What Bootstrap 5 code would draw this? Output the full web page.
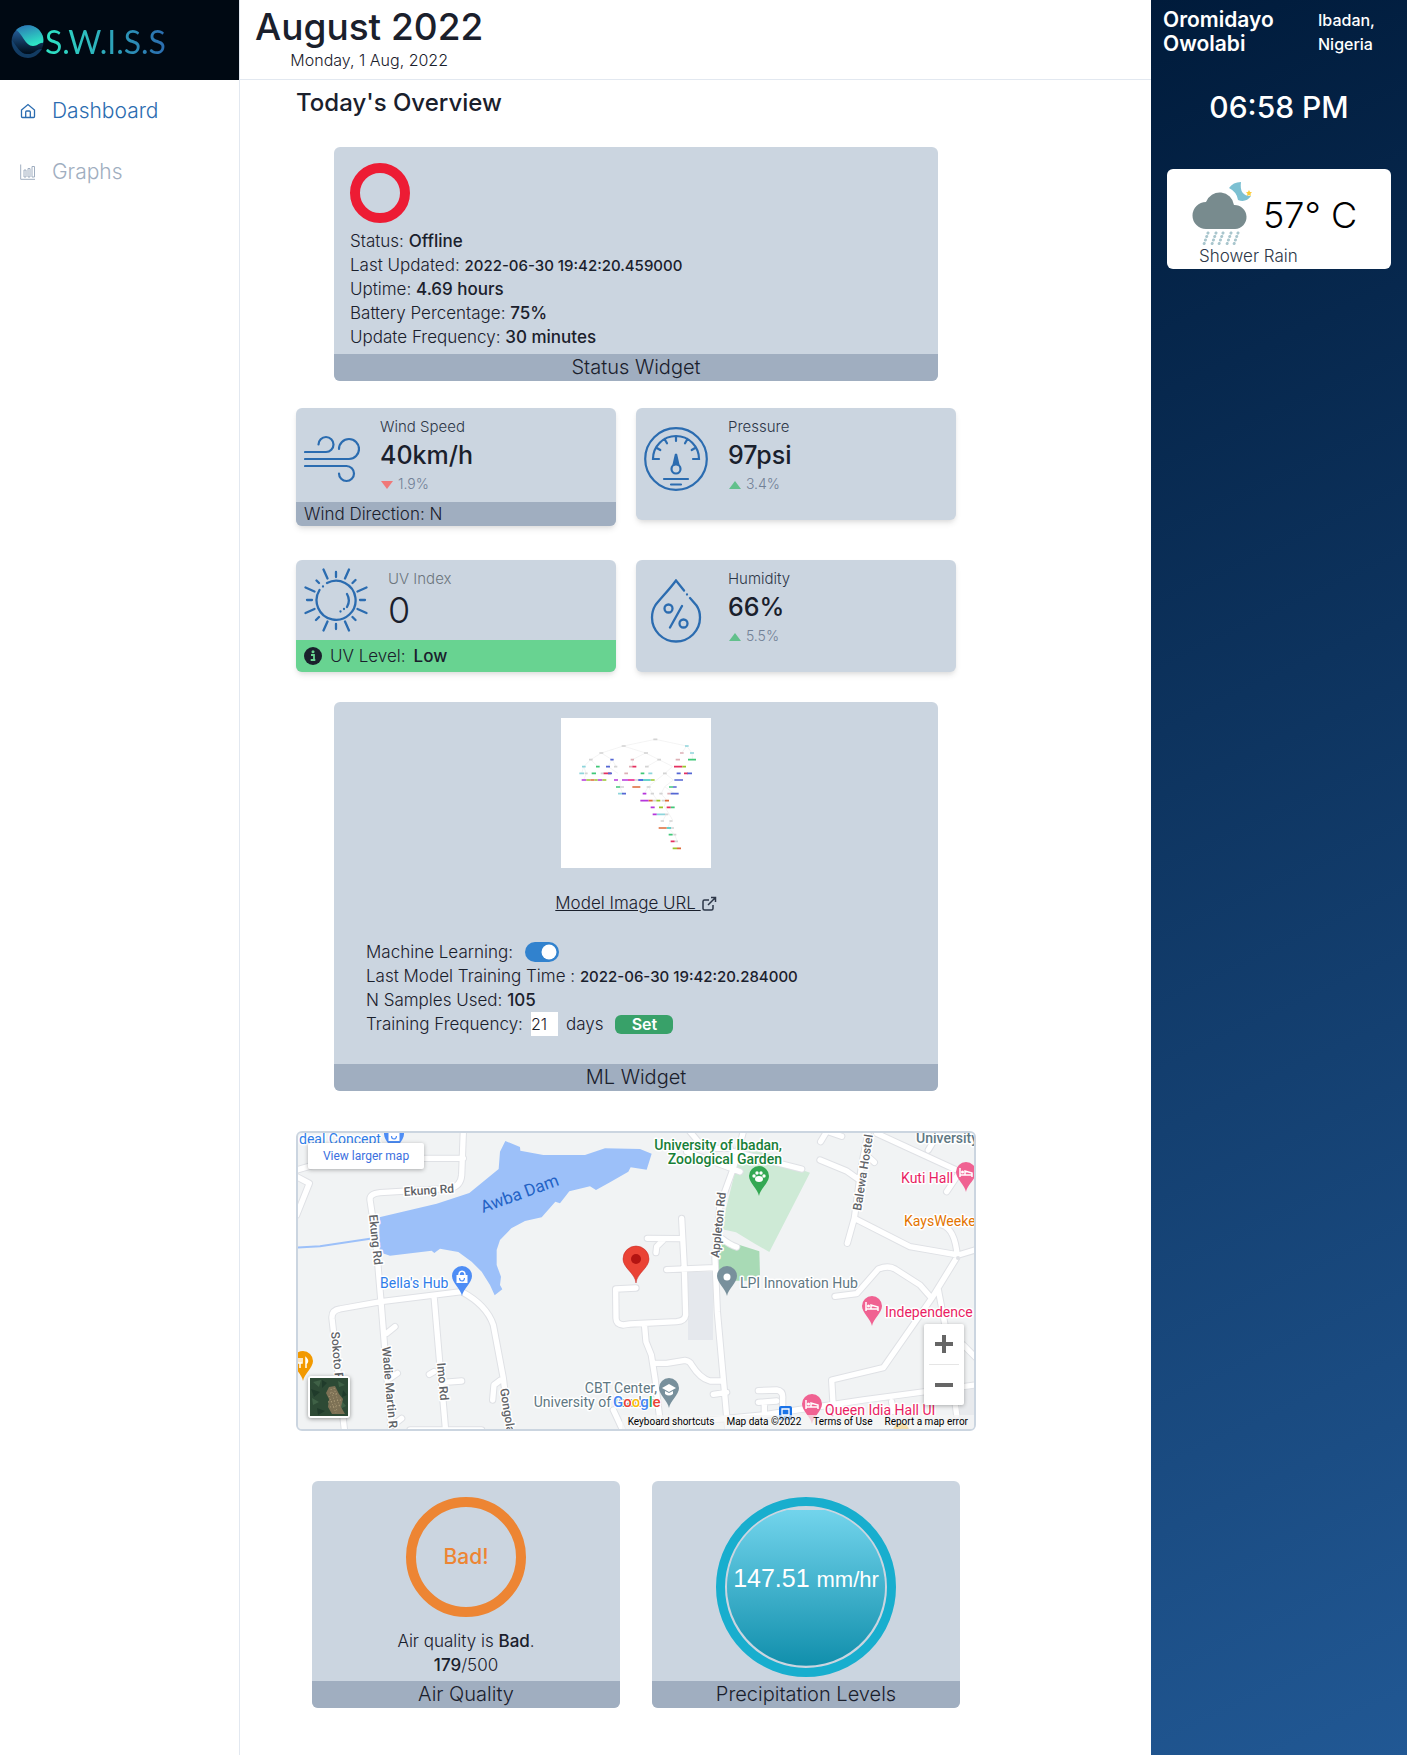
<!DOCTYPE html>
<html lang="en">
<head>
<meta charset="utf-8">
<meta name="viewport" content="width=device-width, initial-scale=1">
<title>S.W.I.S.S Dashboard</title>
<link href="https://cdn.jsdelivr.net/npm/bootstrap@5.3.0/dist/css/bootstrap.min.css" rel="stylesheet">
<style>
body{font-family:Inter,"Open Sans",sans-serif;font-weight:300;font-size:17px;line-height:24px;color:#1a202c;background:#fff}
b,.semi{font-weight:500}
.stamp{font-size:15px;line-height:16px}
.side-col{width:240px;border-right:1px solid #e2e8f0}
.brand-bar{height:80px;background:#000913;padding-left:11px}
.brand-name{font-family:Lato,sans-serif;font-weight:400;font-size:32px;line-height:40px;background:linear-gradient(90deg,#2ee6c5,#2b6cb0);-webkit-background-clip:text;background-clip:text;color:transparent}
.side-nav{padding-top:1px;gap:1px}
.side-link{font-size:21px;line-height:30px;padding:15px 20px;color:#a0aec0;text-decoration:none;gap:16px}
.side-link.active{color:#2b6cb0}
.top-bar{height:80px;border-bottom:1px solid #e2e8f0;padding:5px 15px 0;font-size:16px}
.top-bar h1{font-size:37px;line-height:43px;font-weight:500}
.content-col{max-width:736px;padding:8px 0 47px 56px}
.content-col h2{font-size:24px;line-height:29px;font-weight:500;margin-bottom:30px}
.panel{background:#cbd5e0;border-radius:6px;overflow:hidden}
.panel-wide{margin:0 38px}
.status-body{padding:16px 16px 5px}
.panel-foot{background:#a0aec0;font-size:20px;line-height:27px;text-align:center}
.wind-foot{background:#a0aec0;padding:0 8px}
.tile-grid{display:grid;grid-template-columns:1fr 1fr;column-gap:20px;row-gap:34px;align-items:start;margin:27px 20px 30px 0}
.tile{min-height:112px;box-shadow:0 4px 6px -1px rgba(0,0,0,.1),0 2px 4px -1px rgba(0,0,0,.06)}
.tile-body{padding:8px;gap:20px}
.tile-icon{margin-top:11px}
.tile-label{font-size:15px;line-height:21px;color:#2d3748}
.tile-value{font-size:25px;line-height:36px;font-weight:500}
.tile-big{font-size:36px;line-height:43px}
.tile-delta{font-size:14px;line-height:21px;color:#718096}
.uv-foot{background:#68d391;padding:4px 8px;gap:8px}
.ring{border:10px solid #ed1c34;border-radius:50%;width:60px;height:60px;margin-bottom:6px}
.ring-air{width:120px;height:120px;border-color:#ed8533;color:#ed8533;font-size:21px}
.gauge{width:180px;height:180px;display:block}
.model-link{display:block;width:max-content;margin:23px auto 0}
.ml-lines{padding:25px 32px 28px}
.form-switch .ml-switch,.ml-switch.form-check-input{width:34px;height:20px;margin:0 0 0 12px;border:0;background-color:#3182ce;border-color:#3182ce;box-shadow:none}
.days-box{width:27px;height:24px;padding:0;border:0;background:#fff;color:inherit;font-weight:300;font-size:16px}
.set-btn{width:58px;height:19px;line-height:19px;padding:0;background:#38a169;color:#fff;border:0;border-radius:6px;font-weight:600;font-size:16px}
.map-frame{height:300px;margin:40px 0 50px;border:2px solid #cbd5e0;border-radius:6px;overflow:hidden;background:#f1f3f4;font-family:Roboto,sans-serif;font-weight:400}
.map-frame svg text{font-family:Roboto,sans-serif}
.map-larger{left:10px;top:10px;width:116px;height:26px;background:#fff;border-radius:2px;font-size:12px;line-height:26px;text-align:center;color:#3b6fe0;text-decoration:none;box-shadow:0 1px 4px rgba(0,0,0,.3)}
.map-sat{left:10px;bottom:11px;padding:0;border:2px solid #fff;border-radius:3px;box-shadow:0 1px 4px rgba(0,0,0,.4);line-height:0}
.map-zoom{right:10px;bottom:24px;width:40px;background:#fff;border-radius:2px;box-shadow:0 1px 4px rgba(0,0,0,.3)}
.map-zoom button{width:40px;height:40px;padding:0;border:0;background:none;display:flex;align-items:center;justify-content:center}
.map-zoom hr{margin:0 5px;color:#999}
.map-credits{right:0;bottom:0;height:14px;padding:0 6px;gap:12px;background:rgba(245,245,245,.7);font-size:10px;line-height:14px}
.map-credits a,.map-credits button{color:#000;text-decoration:none;border:0;padding:0;background:none;line-height:14px}
.duo{gap:32px;padding:0 16px}
.air-text{padding-top:6px}
.right-col{width:256px;background:linear-gradient(155deg,#001b3b,#215894);color:#fff}
.who{padding:8px 12px;font-weight:600}
.who-name{width:155px;font-size:21px}
.who-place{font-size:16px}
.clock{font-size:30px;line-height:36px;font-weight:500;margin-top:25px}
.weather{margin:44px 16px 0;height:100px;border-radius:6px;background:#fff;color:#2d3748;padding:10px 0 0 22px}
.weather-temp{font-size:36px;line-height:43px;color:#000;padding-top:15px}
.weather-name{line-height:22px;padding-left:10px}
</style>
</head>
<body>
<svg width="0" height="0" class="position-absolute" aria-hidden="true"><defs>
<path id="pin" d="M0 0C-1-7-10-13-10-20a10 10 0 1 1 20 0c0 7-9 13-10 20z"/>
<g id="bed"><use href="#pin" fill="#f06292"/><path d="M-6-24v9M-6-17H6M6-15v-4l-7-2v4" fill="none" stroke="#fff" stroke-width="1.500"/><circle cx="-3.500" cy="-20" r="1.500" fill="#fff"/></g>
<g id="bag" stroke="none"><use href="#pin" fill="#4e8df5"/><path d="M-5.500-21h11v8h-11z" fill="#fff"/><path d="M-3-21c0-5 6-5 6 0" fill="none" stroke="#fff" stroke-width="1.500"/><path d="M-2.500-18c0 4 5 4 5 0" fill="none" stroke="#4e8df5" stroke-width="1.200"/></g>
</defs></svg>
<div class="d-flex min-vh-100">
  <aside class="side-col flex-shrink-0">
    <div class="brand-bar d-flex align-items-center pt-1">
      <svg width="34" height="34" viewBox="0 0 34 34" aria-hidden="true"><defs><linearGradient id="orb" x1="0" y1="0" x2="0" y2="1"><stop offset="0" stop-color="#2b6cb0"/><stop offset=".85" stop-color="#01101f"/></linearGradient><linearGradient id="orb2" x1=".2" y1="0" x2=".6" y2="1"><stop offset="0" stop-color="#2b78b5"/><stop offset="1" stop-color="#2eeac6"/></linearGradient></defs><circle cx="16.500" cy="16.500" r="16" fill="url(#orb)"/><path d="M5 5C11-1 23-2 29 6c3 4 4 7 3 12-3-1-5 3-10 3C14 21 12 9 5 5z" fill="url(#orb2)"/><path d="M1 15c5 7 9 15 16 14 7 0 9-6 14-5-3 5-8 9-14 9C7 33 0 24 1 15z" fill="#184978" opacity=".75"/></svg>
      <span class="brand-name">S.W.I.S.S</span>
    </div>
    <nav class="side-nav d-flex flex-column">
      <a href="#" class="side-link active d-flex align-items-center"><svg width="16" height="16" viewBox="0 0 16 16" fill="none" stroke="currentColor" stroke-width="1.300" aria-hidden="true"><path d="M1.500 7 8 1.500 14.500 7v6.500a1 1 0 0 1-1 1h-11a1 1 0 0 1-1-1zM5.700 14.500V9q0-1 1-1h2.600q1 0 1 1v5.500"/></svg>Dashboard</a>
      <a href="#" class="side-link d-flex align-items-center"><svg width="16" height="16" viewBox="0 0 16 16" fill="none" stroke="currentColor" aria-hidden="true"><path d="M.7.500v14.800H15M4 6h2v7H4zM8 4.500h2V13H8zM12 2.500h2.500V13H12z"/></svg>Graphs</a>
    </nav>
  </aside>

  <main class="flex-grow-1">
    <header class="top-bar d-flex"><div class="text-center"><h1 class="m-0">August 2022</h1><div>Monday, 1 Aug, 2022</div></div></header>
    <div class="content-col">
      <h2>Today's Overview</h2>

      <section class="panel panel-wide">
        <div class="status-body">
          <div class="ring"></div>
          <div>Status: <b>Offline</b></div>
          <div>Last Updated: <b class="stamp">2022-06-30 19:42:20.459000</b></div>
          <div>Uptime: <b>4.69 hours</b></div>
          <div>Battery Percentage: <b>75%</b></div>
          <div>Update Frequency: <b>30 minutes</b></div>
        </div>
        <div class="panel-foot">Status Widget</div>
      </section>

      <div class="tile-grid">
        <section class="panel tile">
          <div class="tile-body d-flex">
            <svg class="tile-icon" width="56" height="64" viewBox="0 0 56 64" fill="none" stroke="#2b6cb0" stroke-width="2.200" stroke-linecap="round" aria-hidden="true"><path d="M1 25h21a7.500 7.500 0 1 0-7.500-7.500M1 32h44a10 10 0 1 0-10-10M1 39h41.500a7.500 7.500 0 1 1-7.500 7.500"/></svg>
            <div><div class="tile-label">Wind Speed</div><div class="tile-value">40km/h</div>
            <div class="tile-delta"><svg width="14" height="10" viewBox="0 0 14 10" aria-hidden="true"><path d="M1 1h12L7 9z" fill="#f07878"/></svg> 1.9%</div></div>
          </div>
          <div class="wind-foot">Wind Direction: N</div>
        </section>
        <section class="panel tile">
          <div class="tile-body d-flex">
            <svg class="tile-icon" width="64" height="64" viewBox="0 0 64 64" fill="none" stroke="#2b6cb0" stroke-width="2.200" stroke-linecap="round" aria-hidden="true"><circle cx="32" cy="32" r="30.800"/><path d="M15 32H9a23 23 0 0 1 46 0h-6M32 9v5M20.500 12l2.500 4.300M43.500 12 41 16.300M12 20.500l4.300 2.500M52 20.500 47.700 23M20 52h24M27 57.500h10"/><circle cx="32" cy="42" r="4.500"/><path d="M29.500 38 32 27l2.500 11M32 31v6"/></svg>
            <div><div class="tile-label">Pressure</div><div class="tile-value">97psi</div>
            <div class="tile-delta"><svg width="14" height="10" viewBox="0 0 14 10" aria-hidden="true"><path d="M1 9h12L7 1z" fill="#62c08c"/></svg> 3.4%</div></div>
          </div>
        </section>
        <section class="panel tile">
          <div class="tile-body d-flex">
            <svg width="64" height="64" viewBox="0 0 64 64" fill="none" stroke="#2b6cb0" stroke-width="2.300" stroke-linecap="round" aria-hidden="true"><path d="M23 15a19.500 19.500 0 1 1-7.500 7M43 26a13 13 0 0 1 0 13M32 4v5M32 56v5M3 32h5M56 32h5M12.500 12.500l2.500 2.500M48.500 15l3-3M12 52l3-3M48.500 49l3 3M19.500 1.500l4 9M45 1.500l-4 9M1.500 19.500l9 4M62.500 19.500l-9 4M1.500 45l9-4M62.500 45l-9-4M19.500 62.500l4-9M45 62.500l-4-9M19 18.500v0M36.500 43.500v0M40 41v0"/></svg>
            <div><div class="tile-label text-secondary">UV Index</div><div class="tile-big">0</div></div>
          </div>
          <div class="uv-foot d-flex align-items-center"><svg width="18" height="18" viewBox="0 0 18 18" aria-hidden="true"><circle cx="9" cy="9" r="9" fill="#1a202c"/><circle cx="9" cy="4.700" r="1.500" fill="#68d391"/><path d="M7 8h3v4.500M6.700 13h4.600" fill="none" stroke="#68d391" stroke-width="1.800"/></svg><span>UV Level:</span><b>Low</b></div>
        </section>
        <section class="panel tile">
          <div class="tile-body d-flex">
            <svg class="tile-icon" width="64" height="64" viewBox="0 0 64 64" fill="none" stroke="#2b6cb0" stroke-width="2.300" stroke-linecap="round" aria-hidden="true"><path d="M40 11.500 32 1.500C25 11 17 19 11.500 26 9 30 8 34 8 38.500a24 24 0 0 0 48 0C56 34 55 30 52.500 26.500L46 19M43 15.500v0M38 27 26 48.500"/><circle cx="24.500" cy="29.500" r="4"/><circle cx="39.500" cy="44.500" r="4"/></svg>
            <div><div class="tile-label">Humidity</div><div class="tile-value">66%</div>
            <div class="tile-delta"><svg width="14" height="10" viewBox="0 0 14 10" aria-hidden="true"><path d="M1 9h12L7 1z" fill="#62c08c"/></svg> 5.5%</div></div>
          </div>
        </section>
      </div>

      <section class="panel panel-wide">
        <div class="pt-3">
          <svg class="d-block mx-auto bg-white" width="150" height="150" viewBox="63 54 450 450" role="img" aria-label="Decision tree">
            <g fill="none" stroke="#e8e8e8" stroke-width="1.500"><path d="M346 118 250 138 184 159 152 179 131 200 125 220M346 118 440 138 425 159M440 138l16 21 2 20M250 138l67 21-40 20 2 20M317 159l40 20 40 20M184 159l32 20 12 20M152 179l22 21M216 179l-12 21 30 20M357 179l-37 21M397 200l-22 20-50 40-12 20M375 220l25 20-26 20-10 20M374 260l28 20M325 260l12 20 14 20M362 280l18 20-8 20M374 320l24 40M380 342l-12 20M392 362l-8 20 20 22 8 20M240 240v20l8 20M131 200l8 20-8 20"/></g>
            <g stroke-width="5" fill="none"><path stroke="#d4d4d4" d="M340 118h12M245 138h12M178 159h12M312 159h12M147 179h11M352 179h11M315 200h11M369 220h11M320 261h12M332 281h10M358 281h10M362 363h10M388 363h10M338 302h10M365 302h10M375 343h10M400 404h9M405 424h9M222 200h10M134 220h9M182 220h10M392 384h10M240 261h12M285 240h12"/>
            <path stroke="#8ed5dc" d="M435 138h11M450 159h12M126 200h11M118 220h14M325 220h12M234 281h12M350 343h25"/><path stroke="#ddb0b6" d="M420 159h11M407 179h13M272 179h10M267 200h10M253 220h11M382 281h10"/><path stroke="#40c878" d="M444 179h24M168 200h11M155 220h13M228 261h12M302 220h11M387 261h12M386 404h12M392 322h12"/><path stroke="#e53060" d="M402 200h25M432 220h12M277 200h12M191 220h22M392 424h12M380 322h12"/><path stroke="#5567d4" d="M198 200h12M204 220h12M442 220h14M410 220h12M403 240h26M246 281h12M399 261h11M392 281h24M211 179h10"/><path stroke="#b637dc" d="M125 240h14M173 240h14M222 240h12M246 240h18M301 302h25M332 322h12M338 343h12M308 281h11"/><path stroke="#9bc52d" d="M139 240h12M163 240h10M187 240h12M427 200h11M349 302h12M357 322h12M398 445h13M332 240h12"/><path stroke="#36c4bc" d="M308 240h24M380 384h13"/><path stroke="#dd6a37" d="M277 261h24M326 302h12M375 302h12M356 384h24M411 445h12M151 240h12"/><path stroke="#ed2e94" d="M264 240h20"/><path stroke="#3454dc" d="M295 240h14"/></g>
          </svg>
          <a href="#" class="model-link text-reset">Model Image URL <svg width="16" height="16" viewBox="0 0 16 16" fill="none" stroke="#2d3748" stroke-width="1.500" aria-hidden="true"><path d="M8 4H3.500Q2 4 2 5.500v7Q2 14 3.500 14h7q1.500 0 1.500-1.500V9M10 1.500h4.500V6M14.500 1.500 7 9"/></svg></a>
        </div>
        <div class="ml-lines">
          <div class="form-switch d-flex align-items-center p-0 m-0"><label for="ml">Machine Learning:</label><input class="form-check-input ml-switch" type="checkbox" role="switch" id="ml" checked></div>
          <div>Last Model Training Time : <b class="stamp">2022-06-30 19:42:20.284000</b></div>
          <div>N Samples Used: <b>105</b></div>
          <div class="d-flex align-items-center gap-2"><label for="days">Training Frequency:</label><input id="days" class="days-box" type="text" value="21"><span>days</span><button class="set-btn ms-1" type="button">Set</button></div>
        </div>
        <div class="panel-foot">ML Widget</div>
      </section>

      <section class="map-frame position-relative">
        <svg class="d-block" width="100%" height="296" viewBox="0 0 676 296" preserveAspectRatio="xMidYMid slice" role="img" aria-label="Map of Awba Dam and surroundings">
          <rect width="676" height="296" fill="#f1f3f4"/>
          <path d="M390 139h25v68h-25z" fill="#e5e8ed"/>
          <path d="M662 255h14v41h-14z" fill="#e8eaed"/>
          <g transform="translate(332 -8) scale(.33333)"><path d="M320 120 360 75 420 88 440 108 540 143 418 381 372 355 318 322 273 312z" fill="#ceead6"/><path d="M265 340 388 379 390 450 350 467H265z" fill="#a8dab5"/></g>
          <g transform="translate(-8 -8) scale(.33333)"><path d="M268 277 440 236 538 204 626 132 630 80 646 48 690 66 691 77 760 90H885L945 70 1050 72 1085 86 1070 134 1022 127 1015 140 960 172 918 195 900 184 838 199 810 235 796 230 755 277 705 288 664 310 630 345 620 375V420L633 455 630 480 637 493 614 511 600 480 575 440 545 410 505 381 450 371 433 384 425 377 300 392 278 385 268 370z" fill="#9cc0f9"/><path d="M20 368 90 364 240 341" stroke="#9cc0f9" stroke-width="6" fill="none"/></g>
          <g fill="none" stroke-linecap="round" stroke-linejoin="round">
            <g stroke="#dfe1e5" stroke-width="22">
              <g transform="translate(-8 -8) scale(.33333)"><path id="ra" d="M520 20 515 150Q512 185 480 190L270 203Q238 206 240 225L256 330 273 530 305 930M20 135 140 100 520 100M20 155 58 175 20 270M165 930 126 580Q124 556 150 552L273 530 515 500M515 500Q590 540 610 600L640 760 660 930M432 512 448 700 468 930M290 625 315 605M300 760 322 745M310 900 335 880M432 740 418 748M460 772 515 768M632 765 612 780 608 825M970 855 1005 930M360 915H575"/></g>
              <g transform="translate(332 -8) scale(.33333)"><path id="rb" d="M340 20 310 130 270 240 255 400 262 560 295 930M170 80 330 140M310 80 515 132M180 20 205 50 250 70 300 70M275 340Q300 360 320 366M52 340 155 341M100 345 80 365 78 383M155 280 163 430 167 570Q165 588 140 590L0 597-20 600Q-42 598-42 580L-43 492 18 489M110 434 255 428M44 605 48 650 64 690 75 760 95 930M75 715H110L165 706Q180 708 185 720 210 760 240 768H280M250 808 290 802M715 20 695 120 673 280 652 355M740 25 975 133M570 105 650 138 695 170M590 20 572 50M600 22 635 34M720 100 733 112M910 50 895 75M990 140 950 200M673 280 840 365 985 390 1035 375M935 300Q975 310 982 395L905 520 760 728 605 765 610 850M615 514 680 506 745 432Q775 420 795 432L870 480 905 520M925 495 945 600M1000 660 1040 700M385 797 440 795Q460 798 458 820V850M385 832 440 828M403 835V900M130 895 400 870 700 825 1035 780M785 830 790 860M970 790 980 870"/></g>
            </g>
            <g stroke="#fff" stroke-width="16"><use href="#ra" transform="translate(-8 -8) scale(.33333)"/><use href="#rb" transform="translate(332 -8) scale(.33333)"/></g>
          </g>
          <circle cx="660" cy="125" r="2" fill="#dfe1e5"/>
          <g font-size="12" font-weight="500" fill="#5f6368" stroke="#fff" stroke-width="3" stroke-linejoin="round" paint-order="stroke">
            <text transform="translate(106 63) rotate(-4)">Ekung Rd</text>
            <text transform="translate(71 82) rotate(84)">Ekung Rd</text>
            <text transform="translate(33 199) rotate(85)">Sokoto R</text>
            <text transform="translate(84 214) rotate(85)">Wadie Martin Rd</text>
            <text transform="translate(139 230) rotate(85)">Imo Rd</text>
            <text transform="translate(202 256) rotate(81)">Gongola Rd</text>
            <text transform="translate(421 125) rotate(-84)">Appleton Rd</text>
            <text transform="translate(563 78) rotate(-81)">Balewa Hostel</text>
          </g>
          <text transform="translate(185 80) rotate(-20)" font-size="17" fill="#2362c5">Awba Dam</text>
          <g font-size="14" fill="#2f7de9" stroke="#fff" stroke-width="3" stroke-linejoin="round" paint-order="stroke">
            <text x="1" y="11">deal Concept</text><text x="82" y="155">Bella's Hub</text>
            <g fill="#188038" font-weight="500" text-anchor="end"><text x="484" y="17">University of Ibadan,</text><text x="484" y="31">Zoological Garden</text></g>
            <g fill="#5f7883"><text x="442" y="155">LPI Innovation Hub</text><text x="618" y="10" font-weight="500">University</text><text x="359" y="260" text-anchor="end">CBT Center,</text><text x="359" y="274" text-anchor="end">University of Ibadan</text></g>
            <g fill="#e91e63"><text x="603" y="50">Kuti Hall</text><text x="587" y="184">Independence</text><text x="527" y="282">Queen Idia Hall UI</text></g>
            <text x="606" y="93" fill="#e37400">KaysWeeke</text>
          </g>
          <use href="#bag" x="164" y="163"/><use href="#bag" x="96" y="21"/>
          <use href="#bed" x="668" y="59"/><use href="#bed" x="574" y="193"/><use href="#bed" x="514" y="291"/>
          <g transform="translate(461 63)"><use href="#pin" fill="#34a853"/><ellipse cy="-17" rx="4" ry="3" fill="#fff"/><circle cx="-5" cy="-20" r="1.700" fill="#fff"/><circle cx="-2" cy="-23" r="1.700" fill="#fff"/><circle cx="2" cy="-23" r="1.700" fill="#fff"/><circle cx="5" cy="-20" r="1.700" fill="#fff"/></g>
          <g transform="translate(429 163)"><use href="#pin" fill="#78909c"/><circle cy="-19" r="3.500" fill="#fff"/></g>
          <g transform="translate(371 275)"><use href="#pin" fill="#78909c"/><path d="M-7-20 0-24l7 4-7 4zM-4-17v3q4 3 8 0v-3l-4 2z" fill="#fff"/></g>
          <g transform="translate(5 248)"><use href="#pin" fill="#f29900"/><path d="M-5-23v5h4v-5M-3-23v10M3-13v-10q3 3 0 6" fill="none" stroke="#fff" stroke-width="1.500"/></g>
          <g transform="translate(338 150)"><path d="M0 0C-1-10-13-15-13-24a13 13 0 1 1 26 0C13-15 1-10 0 0z" fill="#ea4335" stroke="#c5221f" stroke-width=".5"/><circle cy="-24" r="5" fill="#b31412"/></g>
          <rect x="481" y="273" width="13" height="14" rx="2" fill="#1a73e8"/><path d="M484 276h7v6h-7zM484 284h2M489 284h2" fill="#1a73e8" stroke="#fff" stroke-width="1.300"/>
          <circle cx="603" cy="298" r="8" fill="#f9ab00"/>
          <text x="315" y="274" font-size="15" font-weight="500" stroke="#fff" stroke-width="2" paint-order="stroke" fill="#4285f4">G<tspan fill="#ea4335">o</tspan><tspan fill="#fbbc04">o</tspan>g<tspan fill="#34a853">l</tspan><tspan fill="#ea4335">e</tspan></text>
        </svg>
        <a href="#" class="map-larger position-absolute">View larger map</a>
        <button type="button" class="map-sat position-absolute" aria-label="Show satellite imagery"><svg width="38" height="38" viewBox="0 0 38 38" aria-hidden="true"><path fill="#2d4a35" d="M0 0h38v38H0z"/><path fill="#3f6146" d="M3 4l8-2-2 7zM28 3l7 4-6 2zM2 20l7 4-6 3zM31 22l5 6-6 3z"/><path fill="#203b2b" d="M12 2l5 3-5 5zM1 11l9 3-6 5zM7 30l8 3-7 4zM33 12l4 5-5 2z"/><path fill="#7d7155" d="M19 9l6-1 4 8 4 5-2 8 4 7H22l-4-7 1-8-3-6z"/><path stroke="#ab9b78" stroke-dasharray="1 2" d="M21 11l6 22M24 10l6 20M19 18l7 17M18 24l13-2M20 29l11-2M20 15l8 1"/></svg></button>
        <div class="map-zoom position-absolute"><button type="button" aria-label="Zoom in"><svg width="18" height="18" viewBox="0 0 18 18" aria-hidden="true"><path d="M9 0v18M0 9h18" stroke="#666" stroke-width="4"/></svg></button><hr><button type="button" aria-label="Zoom out"><svg width="18" height="18" viewBox="0 0 18 18" aria-hidden="true"><path d="M0 9h18" stroke="#666" stroke-width="4"/></svg></button></div>
        <div class="map-credits position-absolute d-flex"><button type="button">Keyboard shortcuts</button><span class="text-black">Map data ©2022</span><a href="#">Terms of Use</a><a href="#">Report a map error</a></div>
      </section>

      <div class="duo d-flex">
        <section class="panel flex-fill w-50 d-flex flex-column">
          <div class="pt-3 pb-1 text-center flex-grow-1">
            <div class="ring ring-air mx-auto semi d-flex align-items-center justify-content-center">Bad!</div>
            <div class="air-text">Air quality is <b>Bad</b>.</div>
            <div><b>179</b>/500</div>
          </div>
          <div class="panel-foot">Air Quality</div>
        </section>
        <section class="panel flex-fill w-50 d-flex flex-column">
          <div class="pt-3 pb-1 flex-grow-1">
            <svg class="gauge mx-auto" viewBox="0 0 180 180" aria-label="147.51 mm/hr"><defs><linearGradient id="water" x1="0" y1="0" x2="0" y2="1"><stop offset="0" stop-color="#72d4ec"/><stop offset="1" stop-color="#118fac"/></linearGradient></defs><circle cx="90" cy="90" r="85.500" fill="none" stroke="#18aece" stroke-width="9"/><path d="M71 13H109A79 79 0 1 1 71 13z" fill="url(#water)"/><text x="90" y="90" text-anchor="middle" font-family="Liberation Sans, Arial, sans-serif" font-weight="400" font-size="25" fill="#fff">147.51 <tspan font-size="22">mm/hr</tspan></text></svg>
          </div>
          <div class="panel-foot">Precipitation Levels</div>
        </section>
      </div>
    </div>
  </main>

  <aside class="right-col flex-shrink-0">
    <div class="who d-flex"><div class="who-name">Oromidayo<br>Owolabi</div><div class="who-place semi">Ibadan,<br>Nigeria</div></div>
    <div class="clock text-center">06:58 PM</div>
    <div class="weather">
      <div class="d-flex">
        <svg width="66" height="66" viewBox="0 0 66 66" aria-hidden="true"><path d="M52 3q-8 0-12 6 8 4 9 12 8 3 13-4-12 0-10-14z" fill="#7cc0d2"/><path d="M60 11l1 2 2 .3-1.500 1.500.4 2.200-1.900-1-2 1 .5-2.200L57 13.300l2-.3z" fill="#fdcc35"/><path d="M17 50a13.500 13.500 0 1 1 0-27 14.500 14.500 0 0 1 28 3 12 12 0 0 1 1 24z" fill="#788b8e"/><path d="M19 54l-4 11M27 54l-4 11M34 54l-4 11M42 54l-4 11M49 54l-4 11" stroke="#a9c6cd" stroke-width="3" stroke-linecap="round" stroke-dasharray=".1 3.600"/></svg>
        <div class="weather-temp ps-1 ms-1">57° C</div>
      </div>
      <div class="weather-name">Shower Rain</div>
    </div>
  </aside>
</div>
<script src="https://cdn.jsdelivr.net/npm/bootstrap@5.3.0/dist/js/bootstrap.bundle.min.js"></script>
</body>
</html>
